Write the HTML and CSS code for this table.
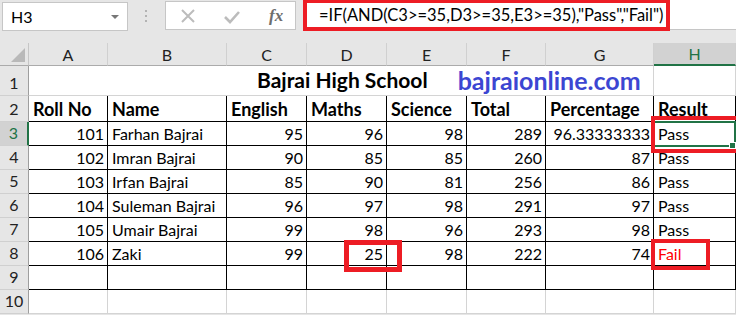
FILE: index.html
```html
<!DOCTYPE html>
<html lang="en">
<head>
    <meta charset="UTF-8">
    <title>Bajrai High School</title>
    <link rel="stylesheet" href="styles.css">
</head>
<body>
    <div class="bar">
        <div class="namebox">
            <span>H3</span>
            <i class="drop"></i>
        </div>
        <div class="grip"><i></i><i></i><i></i></div>
        <div class="btns">
            <svg width="18" height="18" viewBox="0 0 18 18"><path d="M3 3L15 15M15 3L3 15" stroke="#bcbcbc" stroke-width="2" fill="none"/></svg>
            <svg class="ok" width="18" height="18" viewBox="0 0 18 18"><path d="M2 10L7 15L16 5" stroke="#bcbcbc" stroke-width="2.6" fill="none"/></svg>
            <span class="fx">fx</span>
        </div>
        <div class="formula">
            <span>=IF(AND(C3&gt;=35,D3&gt;=35,E3&gt;=35),"Pass","Fail")</span>
            <div class="mark mark-formula"></div>
        </div>
    </div>

    <div class="sheet">
        <!-- column headers -->
        <div class="corner"><i></i></div>
        <div class="colh">A</div>
        <div class="colh">B</div>
        <div class="colh">C</div>
        <div class="colh">D</div>
        <div class="colh">E</div>
        <div class="colh">F</div>
        <div class="colh">G</div>
        <div class="colh sel">H</div>

        <!-- row 1 -->
        <div class="rowh">1</div>
        <div class="c grid title">
            <b>Bajrai High School</b>
            <b class="site">bajraionline.com</b>
        </div>
        <div class="c grid"></div>

        <!-- row 2 -->
        <div class="rowh">2</div>
        <div class="c t head">Roll No</div>
        <div class="c t head">Name</div>
        <div class="c t head">English</div>
        <div class="c t head">Maths</div>
        <div class="c t head">Science</div>
        <div class="c t head">Total</div>
        <div class="c t head">Percentage</div>
        <div class="c t head">Result</div>

        <!-- rows 3-8 -->
        <div class="rowh sel">3</div>
        <div class="c t n">101</div><div class="c t">Farhan Bajrai</div><div class="c t n">95</div><div class="c t n">96</div><div class="c t n">98</div><div class="c t n">289</div><div class="c t n">96.33333333</div><div class="c t">Pass</div>

        <div class="rowh">4</div>
        <div class="c t n">102</div><div class="c t">Imran Bajrai</div><div class="c t n">90</div><div class="c t n">85</div><div class="c t n">85</div><div class="c t n">260</div><div class="c t n">87</div><div class="c t">Pass</div>

        <div class="rowh">5</div>
        <div class="c t n">103</div><div class="c t">Irfan Bajrai</div><div class="c t n">85</div><div class="c t n">90</div><div class="c t n">81</div><div class="c t n">256</div><div class="c t n">86</div><div class="c t">Pass</div>

        <div class="rowh">6</div>
        <div class="c t n">104</div><div class="c t">Suleman Bajrai</div><div class="c t n">96</div><div class="c t n">97</div><div class="c t n">98</div><div class="c t n">291</div><div class="c t n">97</div><div class="c t">Pass</div>

        <div class="rowh">7</div>
        <div class="c t n">105</div><div class="c t">Umair Bajrai</div><div class="c t n">99</div><div class="c t n">98</div><div class="c t n">96</div><div class="c t n">293</div><div class="c t n">98</div><div class="c t">Pass</div>

        <div class="rowh">8</div>
        <div class="c t n">106</div><div class="c t">Zaki</div><div class="c t n">99</div><div class="c t n">25</div><div class="c t n">98</div><div class="c t n">222</div><div class="c t n">74</div><div class="c t fail">Fail</div>

        <!-- row 9 (empty, still inside the table border) -->
        <div class="rowh">9</div>
        <div class="c t"></div><div class="c t"></div><div class="c t"></div><div class="c t"></div><div class="c t"></div><div class="c t"></div><div class="c t"></div><div class="c t"></div>

        <!-- row 10 -->
        <div class="rowh">10</div>
        <div class="c grid"></div><div class="c grid"></div><div class="c grid"></div><div class="c grid"></div><div class="c grid"></div><div class="c grid"></div><div class="c grid"></div><div class="c grid"></div>

        <!-- active cell and markers -->
        <div class="active"><i></i></div>
        <div class="mark mark-h3"></div>
        <div class="mark mark-d8"></div>
        <div class="mark mark-h8"></div>
    </div>
</body>
</html>
```

FILE: styles.css
```css
body{
    margin:0;
    width:736px;
    height:315px;
    overflow:hidden;
    background:#e6e6e6;
    font-family:Lato, "Liberation Sans", sans-serif;
    color:#000;
}

/* formula bar */
.bar{
    display:flex;
    align-items:flex-start;
    height:43px;
    padding-top:1px;
    box-sizing:border-box;
}
.namebox{
    display:flex;
    align-items:center;
    justify-content:space-between;
    width:126px;
    height:29px;
    margin:1px 0 0 2px;
    padding:0 8px 0 8px;
    box-sizing:border-box;
    background:#fff;
    border:1px solid #c6c6c6;
    font-size:16px;
}
.drop{
    width:0;
    height:0;
    border-left:4px solid transparent;
    border-right:4px solid transparent;
    border-top:4px solid #777;
}
.grip{
    display:flex;
    flex-direction:column;
    gap:3px;
    margin:9px 0 0 17px;
}
.grip i{
    width:2px;
    height:2px;
    background:#b3b3b3;
}
.btns{
    display:flex;
    align-items:center;
    width:131px;
    height:29px;
    margin-left:18px;
    padding-left:13px;
    box-sizing:border-box;
    background:#fff;
    border:1px solid #c6c6c6;
}
.btns .ok{
    margin-left:26px;
}
.fx{
    font-family:"Liberation Serif", serif;
    font-style:italic;
    font-weight:bold;
    font-size:17px;
    color:#6e6e6e;
    margin-left:28px;
}
.formula{
    position:relative;
    flex:1;
    height:30px;
    margin-left:7px;
    margin-top:-1px;
    padding-left:16px;
    box-sizing:border-box;
    background:#fff;
    border-bottom:1px solid #c6c6c6;
    font-size:16.5px;
    line-height:31px;
}

/* worksheet */
.sheet{
    position:relative;
    display:grid;
    grid-template-columns:29px 79px 119px 80px 80px 80px 79px 108px 82px;
    grid-template-rows:23px 30px 26px repeat(8,24px);
    background:#fff;
}
.corner,.colh,.rowh{
    background:#e6e6e6;
    box-sizing:border-box;
}
.corner{
    position:relative;
    border-right:1px solid #c6c6c6;
    border-bottom:1px solid #ababab;
}
.corner i{
    position:absolute;
    right:3px;
    bottom:3px;
    width:0;
    height:0;
    border-left:14px solid transparent;
    border-bottom:14px solid #b9b9b9;
}
.colh{
    display:flex;
    align-items:center;
    justify-content:center;
    font-size:16px;
    color:#222;
    border-right:1px solid #d0d0d0;
    border-bottom:1px solid #ababab;
}
.colh.sel{
    background:#d2d2d2;
    color:#217346;
    border-bottom:2px solid #217346;
}
.rowh{
    display:flex;
    align-items:flex-end;
    justify-content:center;
    padding-bottom:3px;
    font-size:16px;
    color:#222;
    border-right:1px solid #9e9e9e;
    border-bottom:1px solid #d0d0d0;
}
.rowh.sel{
    background:#d2d2d2;
    color:#217346;
    border-right:2px solid #217346;
}

.c{
    display:flex;
    align-items:flex-end;
    box-sizing:border-box;
    padding:0 3px 2px 4px;
    font-size:16px;
    white-space:nowrap;
}
.c.grid{
    border-right:1px solid #d4d4d4;
    border-bottom:1px solid #d4d4d4;
}
.c.t{
    border-right:1px solid #000;
    border-bottom:1px solid #000;
}
.c.n{
    justify-content:flex-end;
}
.c.head{
    font-weight:bold;
    font-size:18px;
    padding-bottom:1px;
}
.c.fail{
    color:#ff0000;
}
.title{
    grid-column:2 / 9;
    padding-left:228px;
    padding-bottom:3px;
    font-size:21px;
}
.site{
    color:#3c46d2;
    font-size:25px;
    margin-left:30px;
    line-height:1;
    margin-bottom:-1px;
}

/* active cell H3 */
.active{
    position:absolute;
    left:652px;
    top:78px;
    width:84px;
    height:26px;
    box-sizing:border-box;
    border:2px solid #217346;
}
.active i{
    position:absolute;
    right:-2px;
    bottom:-4px;
    width:5px;
    height:5px;
    background:#217346;
    border:1px solid #fff;
}

/* red markers */
.mark{
    position:absolute;
    box-sizing:border-box;
    border:4px solid #ed1c24;
}
.mark-formula{
    left:0;
    top:-1px;
    width:367px;
    height:32px;
}
.mark-h3{
    left:651px;
    top:73px;
    width:95px;
    height:37px;
}
.mark-d8{
    left:344px;
    top:197px;
    width:58px;
    height:32px;
    border-width:5px;
}
.mark-h8{
    left:651px;
    top:196px;
    width:59px;
    height:31px;
}
```
